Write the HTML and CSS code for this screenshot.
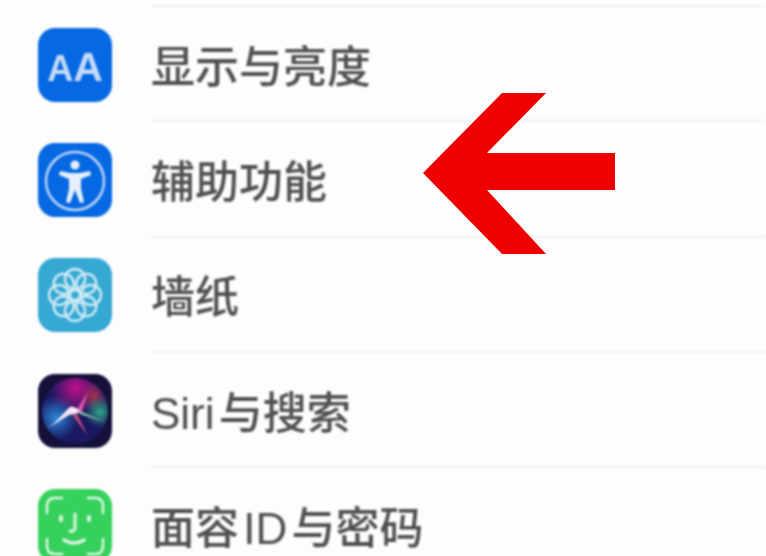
FILE: index.html
```html
<!DOCTYPE html>
<html lang="zh-CN">

<head>
  <meta charset="UTF-8" />
  <meta name="viewport" content="width=device-width, initial-scale=1.0" />
  <title>设置</title>
  <link rel="stylesheet" href="styles.css">
</head>

<body>
  <ul class="list">
    <li class="item">
      <div class="icon icon-blue"><span class="aa">A</span><span class="aa aa-big">A</span></div>
      <div class="label">显示与亮度</div>
    </li>
    <li class="item">
      <div class="icon icon-blue">
        <svg viewBox="0 0 74 74" width="74" height="74">
          <circle cx="37" cy="38" r="29" fill="none" stroke="#bcd6f8" stroke-width="2.5" />
          <circle cx="37" cy="22" r="4.5" fill="#e6f0fd" />
          <path d="M22 28 L32 30 H42 L52 28 L53 32 L43 36 L43 46 L46 59 L42 60 L37 47 L32 60 L28 59 L31 46 L31 36 L21 32 Z" fill="#e6f0fd" />
        </svg>
      </div>
      <div class="label">辅助功能</div>
    </li>
    <li class="item">
      <div class="icon icon-teal">
        <svg viewBox="0 0 74 74" width="74" height="74" fill="none" stroke="#cfeaf4" stroke-width="2.5">
          <circle cx="37" cy="37" r="5" />
          <circle cx="37" cy="21" r="10" />
          <circle cx="37" cy="53" r="10" />
          <circle cx="21" cy="37" r="10" />
          <circle cx="53" cy="37" r="10" />
          <circle cx="25.7" cy="25.7" r="10" />
          <circle cx="48.3" cy="25.7" r="10" />
          <circle cx="25.7" cy="48.3" r="10" />
          <circle cx="48.3" cy="48.3" r="10" />
        </svg>
      </div>
      <div class="label">墙纸</div>
    </li>
    <li class="item">
      <div class="icon icon-siri">
        <svg viewBox="0 0 74 74" width="74" height="74">
          <defs>
            <radialGradient id="siriPink" gradientUnits="userSpaceOnUse" cx="38" cy="14" r="26">
              <stop offset="0" stop-color="#c10f8c" />
              <stop offset="1" stop-color="#c10f8c" stop-opacity="0" />
            </radialGradient>
            <radialGradient id="siriRed" gradientUnits="userSpaceOnUse" cx="56" cy="22" r="14">
              <stop offset="0" stop-color="#a83250" />
              <stop offset="1" stop-color="#a83250" stop-opacity="0" />
            </radialGradient>
            <radialGradient id="siriBlue" gradientUnits="userSpaceOnUse" cx="18" cy="44" r="22">
              <stop offset="0" stop-color="#2b86d8" />
              <stop offset="1" stop-color="#2b86d8" stop-opacity="0" />
            </radialGradient>
            <radialGradient id="siriGreen" gradientUnits="userSpaceOnUse" cx="62" cy="38" r="16">
              <stop offset="0" stop-color="#2fa585" />
              <stop offset="1" stop-color="#2fa585" stop-opacity="0" />
            </radialGradient>
          </defs>
          <circle cx="37" cy="37" r="33" fill="#1a1860" />
          <circle cx="37" cy="37" r="33" fill="url(#siriPink)" />
          <circle cx="37" cy="37" r="33" fill="url(#siriRed)" />
          <circle cx="37" cy="37" r="33" fill="url(#siriBlue)" />
          <circle cx="37" cy="37" r="33" fill="url(#siriGreen)" />
          <path d="M38 36 L50 18 L44 38 Z" fill="#d84fa6" />
          <path d="M38 38 L50 62 L35 42 Z" fill="#b9477f" />
          <path d="M40 36 L66 48 L42 40 Z" fill="#8fc9b4" />
          <path d="M10 54 C20 47 26 38 32 33 C36 32 40 35 42 38 C38 40 34 40 31 41 C24 45 17 50 10 54 Z" fill="#f4e9f4" />
        </svg>
      </div>
      <div class="label">Siri 与搜索</div>
    </li>
    <li class="item">
      <div class="icon icon-green">
        <svg viewBox="0 0 74 74" width="74" height="74" fill="none" stroke="#dcf7e2" stroke-width="2.5" stroke-linecap="round">
          <path d="M9 24 V17 Q9 9 17 9 H24" />
          <path d="M50 9 H57 Q65 9 65 17 V24" />
          <path d="M9 50 V57 Q9 65 17 65 H24" />
          <path d="M50 65 H57 Q65 65 65 57 V50" />
          <path d="M23 28 V31" stroke-width="4" />
          <path d="M51 28 V31" stroke-width="4" />
          <path d="M37 25 V39 Q37 43 32 42" stroke-width="3" />
          <path d="M26 51 Q36 57 46 51" stroke-width="3.5" />
        </svg>
      </div>
      <div class="label">面容 ID 与密码</div>
    </li>
  </ul>

  <!-- 红色箭头盖在列表上面 -->
  <svg class="arrow" viewBox="0 0 193 162" width="193" height="162">
    <path d="M0 80 L79 0 H123 L64 60 H192 V97 H64 L123 161 H79 Z" fill="#ee0000" />
  </svg>
</body>

</html>
```

FILE: styles.css
```css
* {
  box-sizing: border-box;
}

html,
body {
  height: 100%;
}

body {
  position: relative;
  margin: 0;
  overflow: hidden;
  background-color: #fdfdfd;
  font-family: "Liberation Sans", "Noto Sans CJK SC", sans-serif;
}

.list {
  padding: 5px 0 0 38px;
  margin: 0;
  list-style: none;
  filter: blur(1.2px);
}

/* 列表顶部那条分隔线 */
.list::before {
  content: "";
  display: block;
  height: 2px;
  margin-left: 113px;
  background-color: #f1f1f3;
}

.item {
  display: flex;
  align-items: center;
  gap: 39px;
  height: 115.3px;
}

.icon {
  flex: none;
  display: flex;
  align-items: center;
  justify-content: center;
  width: 74px;
  height: 74px;
  border-radius: 17px;
  overflow: hidden;
}

.icon-blue {
  align-items: baseline;
  background-color: #0668e2;
}

.icon-blue svg {
  align-self: center;
}

.icon-teal {
  background-color: #35a8d4;
}

.icon-siri {
  background-color: #14103a;
}

.icon-green {
  background-color: #36d15c;
}

.aa {
  padding-top: 19px;
  color: #c6dbf8;
  font-size: 36px;
  font-weight: 700;
  line-height: 1;
}

.aa-big {
  font-size: 41px;
}

.label {
  flex: 1;
  display: flex;
  align-items: center;
  height: 100%;
  border-bottom: 2px solid #f1f1f3;
  color: #505050;
  font-size: 44px;
  font-weight: 500;
  word-spacing: -8px;
  white-space: nowrap;
}

.arrow {
  position: absolute;
  top: 93px;
  left: 423px;
}
```
